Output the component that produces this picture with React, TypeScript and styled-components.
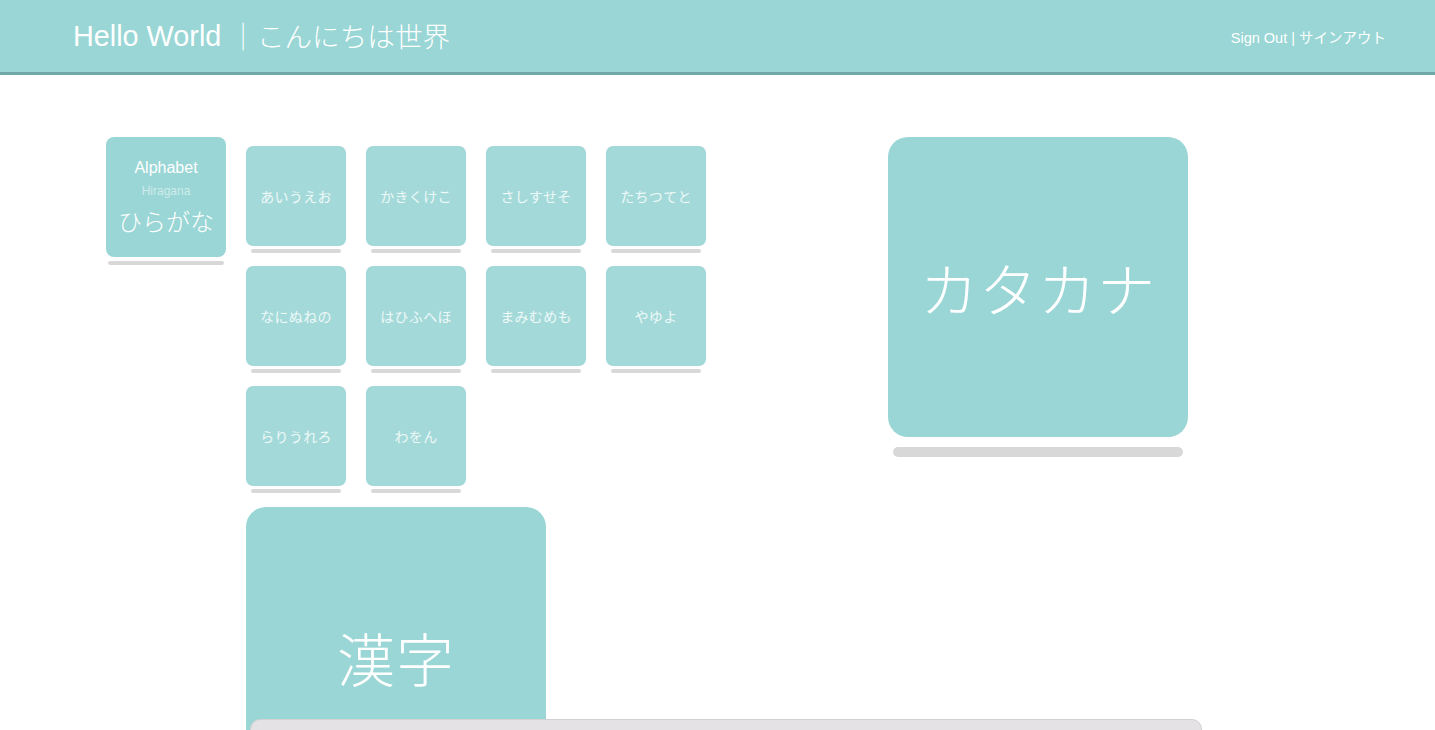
import React from "react";
import styled, { createGlobalStyle } from "styled-components";

const GlobalStyle = createGlobalStyle`
  html, body { margin: 0; padding: 0; background: #ffffff; }
  body { font-family: "Liberation Sans", "Noto Sans CJK JP", sans-serif; overflow: hidden; }
`;

const Page = styled.div`
  width: 1435px;
  height: 730px;
  overflow: hidden;
  position: relative;
  background: #fff;
`;

const Header = styled.header`
  height: 72px;
  background: #99d6d5;
  border-bottom: 3px solid #6fa9a7;
  display: flex;
  align-items: center;
  justify-content: space-between;
  padding: 0 49px 0 73px;
  color: #fff;
`;

const Title = styled.h1`
  margin: 0;
  font-weight: 400;
  font-size: 28.8px;
  font-family: "Liberation Sans", "Noto Sans CJK JP", sans-serif;
  white-space: pre;
  line-height: 1;
  display: flex;
  align-items: center;
`;

const TitleJa = styled.span`
  font-family: "Noto Sans CJK JP", sans-serif;
  font-weight: 300;
  font-size: 27.6px;
  margin-left: 8px;
`;

const SignOut = styled.a`
  font-size: 14.5px;
  color: #fff;
  text-decoration: none;
  white-space: pre;
  font-family: "Liberation Sans", "Noto Sans CJK JP", sans-serif;
`;

const Main = styled.main`
  display: flex;
  align-items: flex-start;
  padding: 62px 0 0 106px;
`;

const Cell = styled.div<{ $w: number }>`
  width: ${(p) => p.$w}px;
  display: flex;
  flex-direction: column;
  align-items: center;
`;

const Card = styled.div<{ $size: number; $radius: number; $light?: boolean }>`
  width: ${(p) => p.$size}px;
  height: ${(p) => p.$size}px;
  border-radius: ${(p) => p.$radius}px;
  background: ${(p) => (p.$light ? "#a3dad9" : "#99d6d5")};
  display: flex;
  flex-direction: column;
  align-items: center;
  justify-content: center;
  color: #fff;
  flex-shrink: 0;
`;

const Bar = styled.div<{ $w: number; $h: number; $gap: number }>`
  width: ${(p) => p.$w}px;
  height: ${(p) => p.$h}px;
  margin-top: ${(p) => p.$gap}px;
  border-radius: ${(p) => p.$h / 2}px;
  background: #d8d8d8;
`;

const AlphaLabel = styled.div`
  font-size: 16px;
  line-height: 20px;
`;

const AlphaSub = styled.div`
  font-size: 12px;
  line-height: 16px;
  color: rgba(255, 255, 255, 0.55);
  margin-top: 5px;
`;

const AlphaKana = styled.div`
  font-family: "Noto Sans CJK JP", sans-serif;
  font-weight: 300;
  font-size: 24px;
  line-height: 30px;
  margin-top: 7px;
`;

const Middle = styled.div`
  display: flex;
  flex-direction: column;
  margin-left: 20px;
  margin-top: 9px;
`;

const Grid = styled.div`
  display: grid;
  grid-template-columns: repeat(4, 100px);
  grid-auto-rows: 120px;
  column-gap: 20px;
  width: 460px;
`;

const SmallText = styled.div`
  font-family: "Noto Sans CJK JP", sans-serif;
  font-size: 14px;
  color: #eef8f8;
  letter-spacing: 0.3px;
`;

const BigText = styled.div`
  font-family: "Noto Sans CJK JP", sans-serif;
  font-weight: 300;
  font-size: 58px;
  letter-spacing: 1px;
`;

const KanjiWrap = styled.div`
  margin-top: 1px;
`;

const Right = styled.div`
  margin-left: 182px;
`;

const Dock = styled.div`
  position: absolute;
  left: 250px;
  width: 950px;
  top: 719px;
  height: 30px;
  background: #e4e2e4;
  border: 1px solid #d2d0d2;
  border-radius: 10px 10px 0 0;
`;

const kana = [
  "あいうえお",
  "かきくけこ",
  "さしすせそ",
  "たちつてと",
  "なにぬねの",
  "はひふへほ",
  "まみむめも",
  "やゆよ",
  "らりうれろ",
  "わをん",
];

export default function App() {
  return (
    <Page>
      <GlobalStyle />
      <Header>
        <Title>
          Hello World<TitleJa>｜こんにちは世界</TitleJa>
        </Title>
        <SignOut href="#">Sign Out | サインアウト</SignOut>
      </Header>
      <Main>
        <Cell $w={120}>
          <Card $size={120} $radius={8}>
            <AlphaLabel>Alphabet</AlphaLabel>
            <AlphaSub>Hiragana</AlphaSub>
            <AlphaKana>ひらがな</AlphaKana>
          </Card>
          <Bar $w={116} $h={4} $gap={4} />
        </Cell>
        <Middle>
          <Grid>
            {kana.map((k) => (
              <Cell $w={100} key={k}>
                <Card $size={100} $radius={7} $light>
                  <SmallText>{k}</SmallText>
                </Card>
                <Bar $w={90} $h={4} $gap={3} />
              </Cell>
            ))}
          </Grid>
          <KanjiWrap>
            <Card $size={300} $radius={20}>
              <BigText>漢字</BigText>
            </Card>
          </KanjiWrap>
        </Middle>
        <Right>
          <Cell $w={300}>
            <Card $size={300} $radius={20}>
              <BigText>カタカナ</BigText>
            </Card>
            <Bar $w={290} $h={10} $gap={10} />
          </Cell>
        </Right>
      </Main>
      <Dock />
    </Page>
  );
}
